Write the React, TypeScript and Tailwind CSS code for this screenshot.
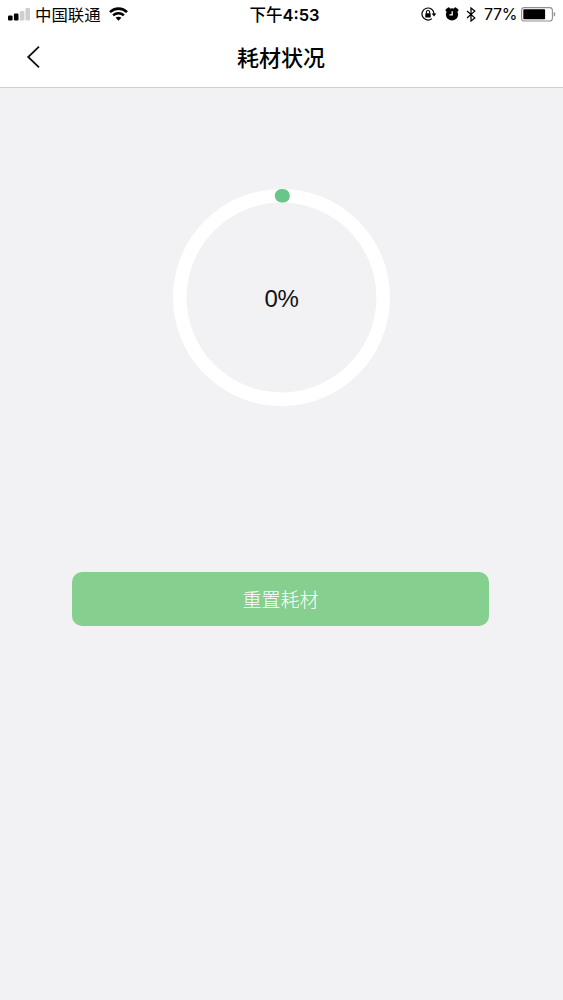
import { useState } from "react";

function SignalIcon() {
  return (
    <svg width="22" height="14" viewBox="0 0 22 14" className="shrink-0">
      <rect x="0" y="8.5" width="4.6" height="5" rx="1.2" fill="#000" />
      <rect x="5.9" y="6.5" width="4.6" height="7" rx="1.2" fill="#000" />
      <rect x="11.8" y="4" width="4.6" height="9.5" rx="1" fill="#cfcfcf" />
      <rect x="17.4" y="1" width="4.6" height="12.5" rx="1" fill="#cfcfcf" />
    </svg>
  );
}

function WifiIcon() {
  return (
    <svg width="19" height="14" viewBox="0 0 19 14" className="shrink-0" fill="none" stroke="#000">
      <path d="M1 5.1 C5.8 0.5 13.2 0.5 18 5.1" strokeWidth="2.7" />
      <path d="M4.1 8.4 C7.2 5.6 11.8 5.6 14.9 8.4" strokeWidth="2.5" />
      <path d="M9.5 13.7 L6.6 10.8 C8.2 9.3 10.8 9.3 12.4 10.8 Z" fill="#000" stroke="none" />
    </svg>
  );
}

function RotationLockIcon() {
  return (
    <svg width="16" height="14" viewBox="0 0 16 14" className="shrink-0" fill="none" stroke="#000">
      <path d="M10.9 11.6 A6 6 0 1 1 13 7" strokeWidth="1.2" />
      <path d="M10.6 6.6 H15.4 L13 9.5 Z" fill="#000" stroke="none" />
      <rect x="4.3" y="6.3" width="5.4" height="4.2" rx="0.6" fill="#000" stroke="none" />
      <path d="M5.4 6.6 V5.2 A1.65 1.65 0 0 1 8.7 5.2 V6.6" strokeWidth="1.1" />
    </svg>
  );
}

function AlarmIcon() {
  return (
    <svg width="14" height="14" viewBox="0 0 14 14" className="shrink-0" fill="none">
      <path d="M1.8 3.2 L3.6 1.7 M12.2 3.2 L10.4 1.7" stroke="#000" strokeWidth="2.6" strokeLinecap="round" />
      <circle cx="7" cy="7.4" r="6.1" fill="#000" />
      <path d="M7.2 4.2 V7.8 H4.4" stroke="#fff" strokeWidth="1.3" />
    </svg>
  );
}

function BluetoothIcon() {
  return (
    <svg width="10" height="15" viewBox="0 0 10 15" className="shrink-0" fill="none" stroke="#000" strokeWidth="1.25">
      <path d="M1 4 L8.8 10.9 L5 14 V1 L8.8 4.1 L1 11" />
    </svg>
  );
}

function BatteryIcon() {
  return (
    <svg width="35" height="15" viewBox="0 0 35 15" className="shrink-0">
      <rect x="0.6" y="0.6" width="30.8" height="13.4" rx="2.8" fill="#fff" stroke="#8f8f8f" strokeWidth="1.1" />
      <rect x="2.3" y="2.3" width="21.8" height="10" rx="0.8" fill="#000" />
      <path d="M32.7 5 C34.8 5.5 34.8 9.1 32.7 9.6 Z" fill="#8f8f8f" />
    </svg>
  );
}

function StatusBar() {
  return (
    <div className="grid h-[28px] grid-cols-[1fr_auto_1fr] items-center pr-[7px] pl-2 text-[16.4px] leading-none">
      <div className="flex items-center">
        <SignalIcon />
        <span className="ml-[5px] pt-[2px]">中国联通</span>
        <span className="ml-[8px]">
          <WifiIcon />
        </span>
      </div>
      <div className="pt-[2px] pl-[5px] text-[16.5px] font-semibold">
        <span className="font-medium">下午</span>4:53
      </div>
      <div className="flex items-center justify-end">
        <RotationLockIcon />
        <span className="ml-[8px]">
          <AlarmIcon />
        </span>
        <span className="ml-[7px]">
          <BluetoothIcon />
        </span>
        <span className="ml-[8px] w-[33px] text-[16px] tracking-[-0.3px] whitespace-nowrap">77%</span>
        <span className="ml-[4px]">
          <BatteryIcon />
        </span>
      </div>
    </div>
  );
}

function ProgressRing({ percent }: { percent: number }) {
  const radius = 101.7;
  const length = 2 * Math.PI * radius;
  // keep a short arc visible at zero so the round caps still show
  const arc = Math.max((percent / 100) * length, 1.6);

  return (
    <div className="grid h-[217px] w-[217px] place-items-center">
      <svg width="217" height="217" viewBox="0 0 217 217" fill="none" className="col-start-1 row-start-1">
        <circle cx="108.5" cy="108.5" r={radius} stroke="#ffffff" strokeWidth="13.6" />
        <circle
          cx="108.5"
          cy="108.5"
          r={radius}
          stroke="#67c688"
          strokeWidth="13.6"
          strokeLinecap="round"
          strokeDasharray={`${arc} ${length}`}
          transform="rotate(-90 108.5 108.5)"
        />
      </svg>
      <span className="col-start-1 row-start-1 pt-[2px] font-['Liberation_Sans',sans-serif] text-[24px] leading-none tracking-[-0.4px] text-[#111]">
        {percent}%
      </span>
    </div>
  );
}

export default function App() {
  const [percent, setPercent] = useState(0);

  return (
    <div className="flex min-h-screen flex-col bg-[#f2f1f4] font-[Inter,'Noto_Sans_CJK_SC',sans-serif] text-black">
      <header className="h-[88px] border-b border-[#cfcfd1] bg-white">
        <StatusBar />
        <div className="grid h-[58px] grid-cols-[1fr_auto_1fr] items-center pr-px">
          <button type="button" aria-label="返回" className="ml-[26px] w-[15px]">
            <svg width="15" height="24" viewBox="0 0 15 24" fill="none" stroke="#111" strokeWidth="1.8">
              <path d="M13 1.7 L2.2 12 L13 22.3" />
            </svg>
          </button>
          <h1 className="pt-[2px] text-[22px] leading-none font-medium">耗材状况</h1>
        </div>
      </header>

      <main className="flex flex-col items-center pt-[101px]">
        <ProgressRing percent={percent} />
        <button
          type="button"
          onClick={() => setPercent(0)}
          className="mt-[166px] mr-[2px] h-[54px] w-[417px] rounded-[10px] bg-[#85cf8f] pt-[5px] text-[19px] font-light text-white"
        >
          重置耗材
        </button>
      </main>
    </div>
  );
}
